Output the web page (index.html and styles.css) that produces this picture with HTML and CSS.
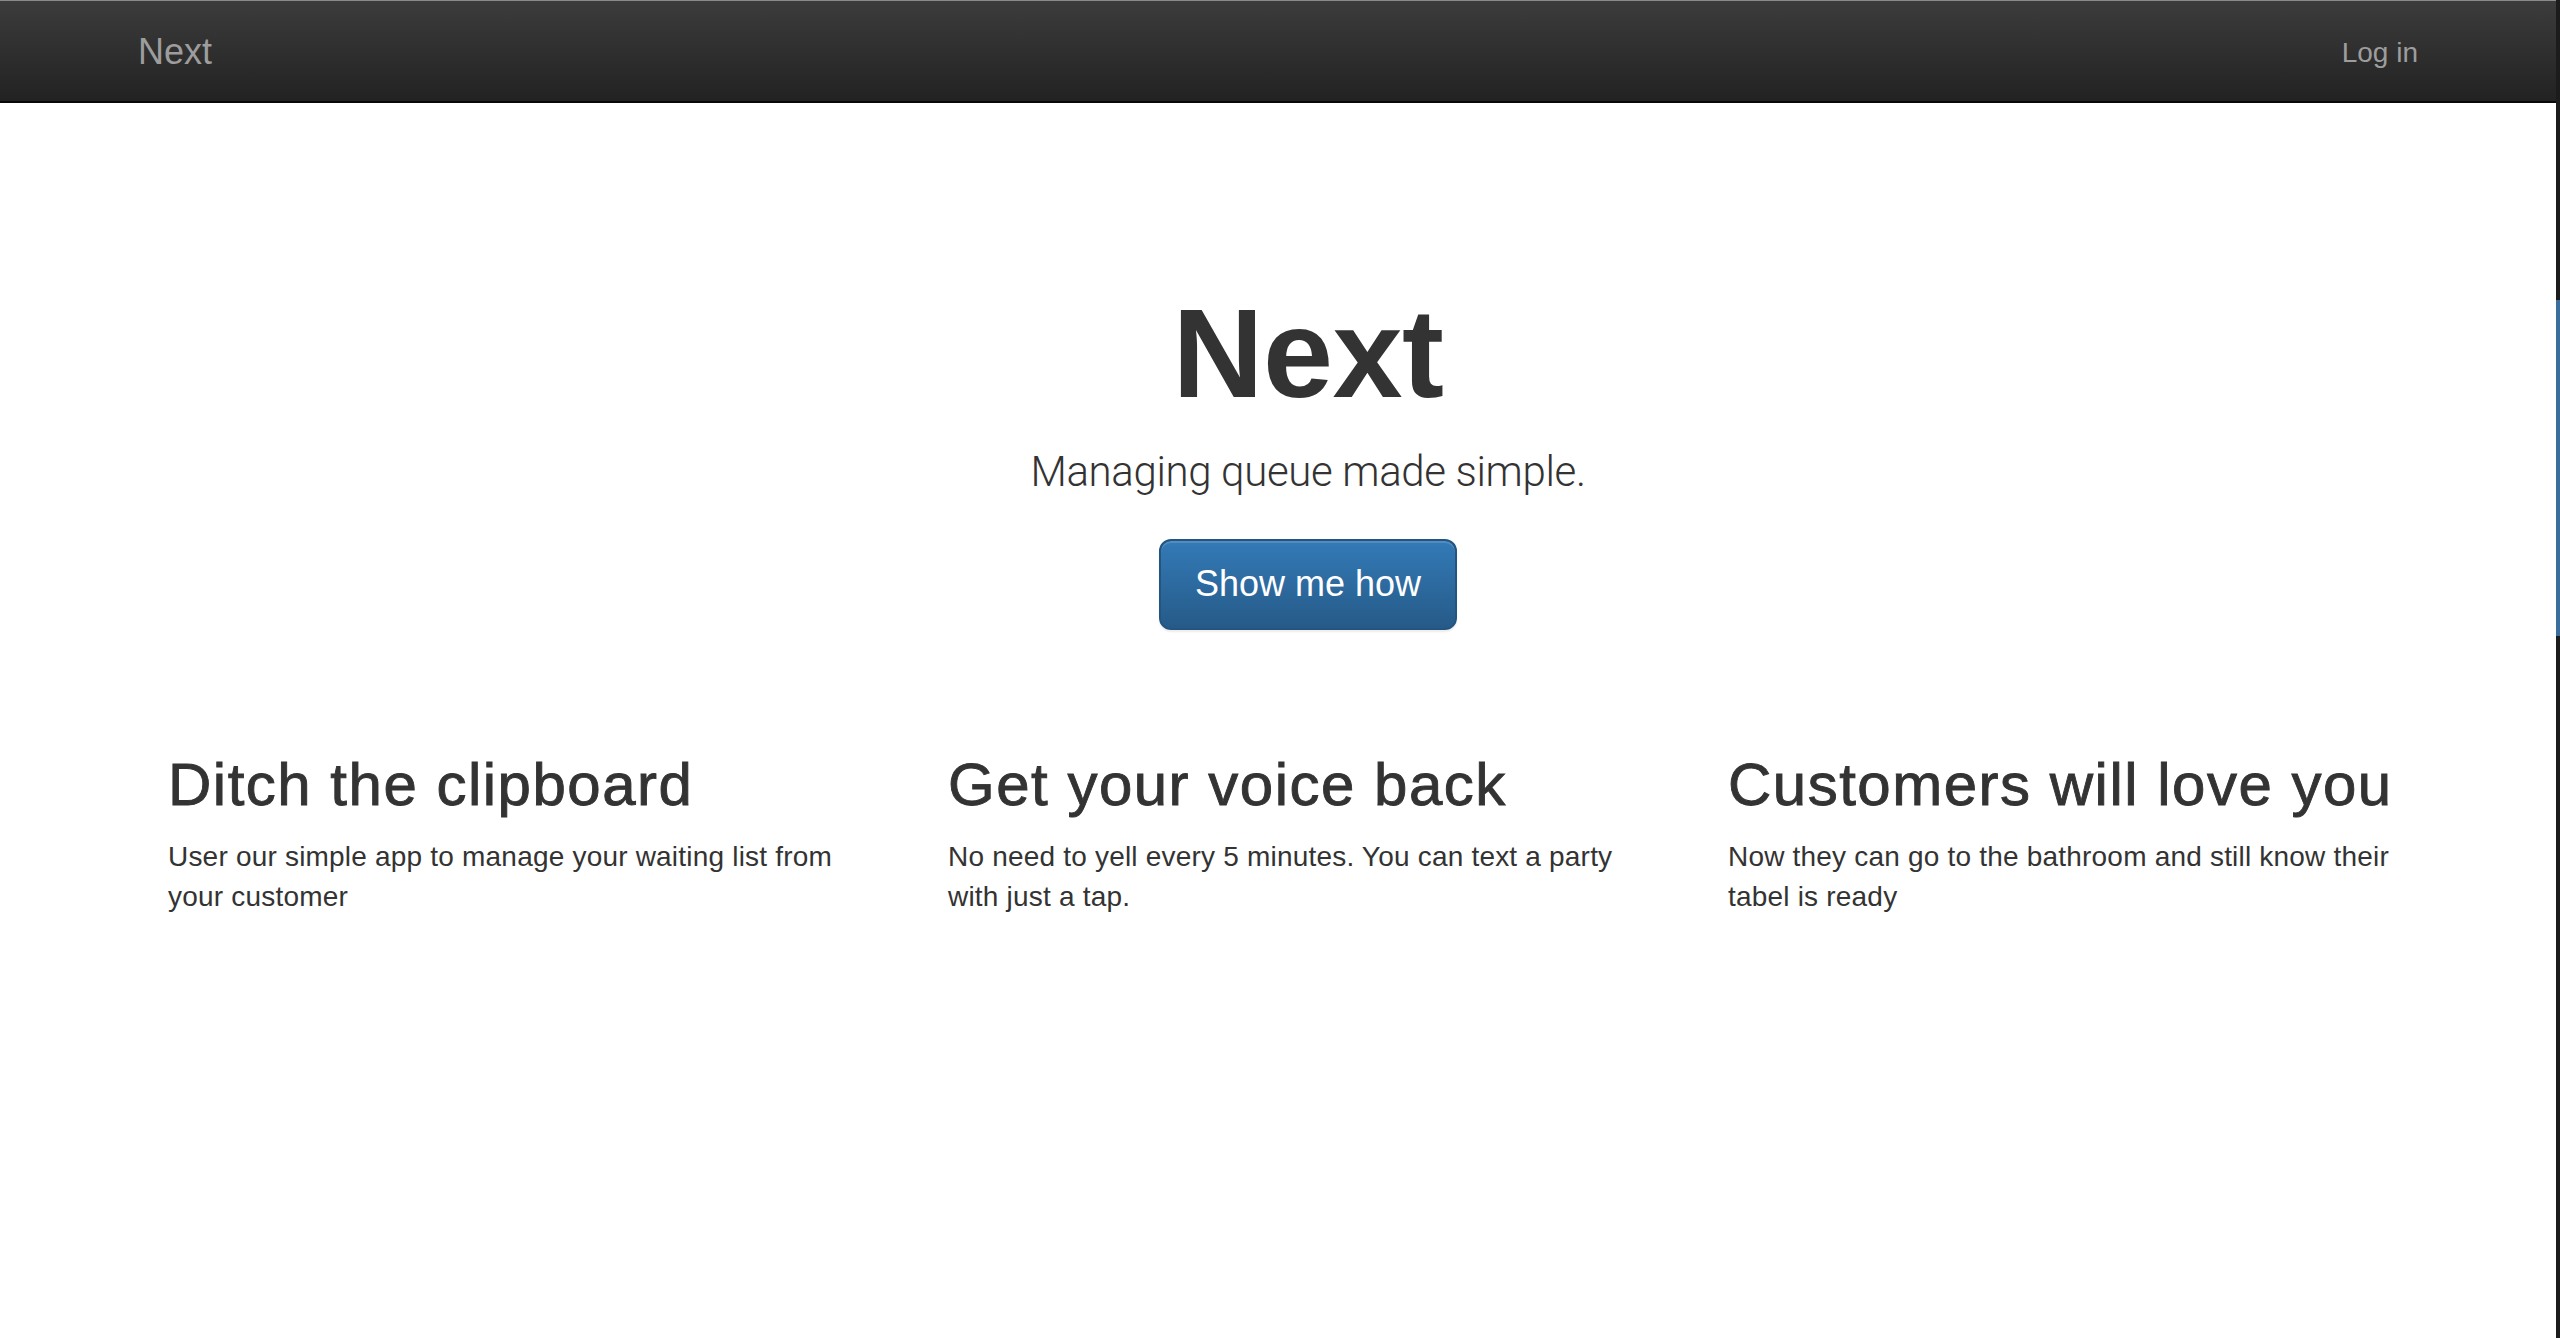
FILE: index.html
```html
<!DOCTYPE html>
<html lang="en">
<head>
<meta charset="utf-8">
<title>Next</title>
<link rel="stylesheet" href="styles.css">
</head>
<body>
<div class="page">
  <nav class="navbar">
    <div class="nav-inner">
      <a class="brand" href="#">Next</a>
      <a class="nav-link" href="#">Log in</a>
    </div>
  </nav>
  <main class="content">
    <section class="hero">
      <h1 class="hero-title">Next</h1>
      <p class="hero-lead">Managing queue made simple.</p>
      <a class="btn-primary" href="#">Show me how</a>
    </section>
    <section class="features">
      <div class="feature">
        <h2 class="feature-title">Ditch the clipboard</h2>
        <p class="feature-text">User our simple app to manage your waiting list from your customer</p>
      </div>
      <div class="feature">
        <h2 class="feature-title">Get your voice back</h2>
        <p class="feature-text">No need to yell every 5 minutes. You can text a party with just a tap.</p>
      </div>
      <div class="feature">
        <h2 class="feature-title">Customers will love you</h2>
        <p class="feature-text">Now they can go to the bathroom and still know their tabel is ready</p>
      </div>
    </section>
  </main>
</div>
<div class="edge"><div class="edge-accent"></div></div>
</body>
</html>
```

FILE: styles.css
```css
* { box-sizing: border-box; }
html, body { margin: 0; padding: 0; }
body {
  display: flex;
  min-height: 100vh;
  background: #fff;
  color: #333;
  font-family: "Liberation Sans", Arial, Helvetica, sans-serif;
}
a { text-decoration: none; }

.page { flex: 1; min-width: 0; }

.navbar {
  height: 103px;
  border-top: 1px solid #8a8a8a;
  border-bottom: 2px solid #080808;
  background: linear-gradient(to bottom, #3c3c3c 0%, #222 100%);
}
.nav-inner {
  width: 2340px;
  margin: 0 auto;
  padding: 0 30px;
  display: flex;
  justify-content: space-between;
  align-items: flex-start;
}
.brand {
  font-size: 36px;
  line-height: 36px;
  padding-top: 33px;
  color: #9d9d9d;
}
.nav-link {
  font-size: 28px;
  line-height: 28px;
  padding-top: 38px;
  color: #9d9d9d;
}

.content { padding-left: 60px; }

.hero {
  display: flex;
  flex-direction: column;
  align-items: center;
  padding-top: 188px;
}
.hero-title {
  margin: 0;
  font-size: 126px;
  line-height: 126px;
  font-weight: 700;
  letter-spacing: -0.5px;
  color: #333;
}
.hero-lead {
  margin: 34px 0 0;
  font-family: Roboto, "Liberation Sans", sans-serif;
  font-weight: 300;
  font-size: 42px;
  line-height: 42px;
  letter-spacing: -0.35px;
  color: #333;
}
.btn-primary {
  margin-top: 46px;
  display: block;
  padding: 19px 34px 20px;
  font-size: 36px;
  line-height: 48px;
  color: #fff;
  border: 2px solid #245580;
  border-radius: 12px;
  background: linear-gradient(to bottom, #337ab7 0%, #265a88 100%);
  box-shadow: inset 0 2px 0 rgba(255,255,255,.15), 0 2px 2px rgba(0,0,0,.075);
}

.features {
  width: 2340px;
  margin: 125px auto 0;
  display: grid;
  grid-template-columns: repeat(3, 1fr);
}
.feature { padding: 0 30px; }
.feature-title {
  margin: 0;
  font-size: 60px;
  line-height: 60px;
  font-weight: 400;
  letter-spacing: 1.5px;
  -webkit-text-stroke: 0.9px #333;
  color: #333;
}
.feature-text {
  margin: 22px 0 0;
  font-size: 28px;
  line-height: 40px;
  letter-spacing: 0.2px;
  color: #333;
}

.edge {
  width: 4px;
  flex: none;
  background: #1c1c1c;
  padding-top: 300px;
}
.edge-accent {
  height: 336px;
  background: #3b6e9b;
}
```
